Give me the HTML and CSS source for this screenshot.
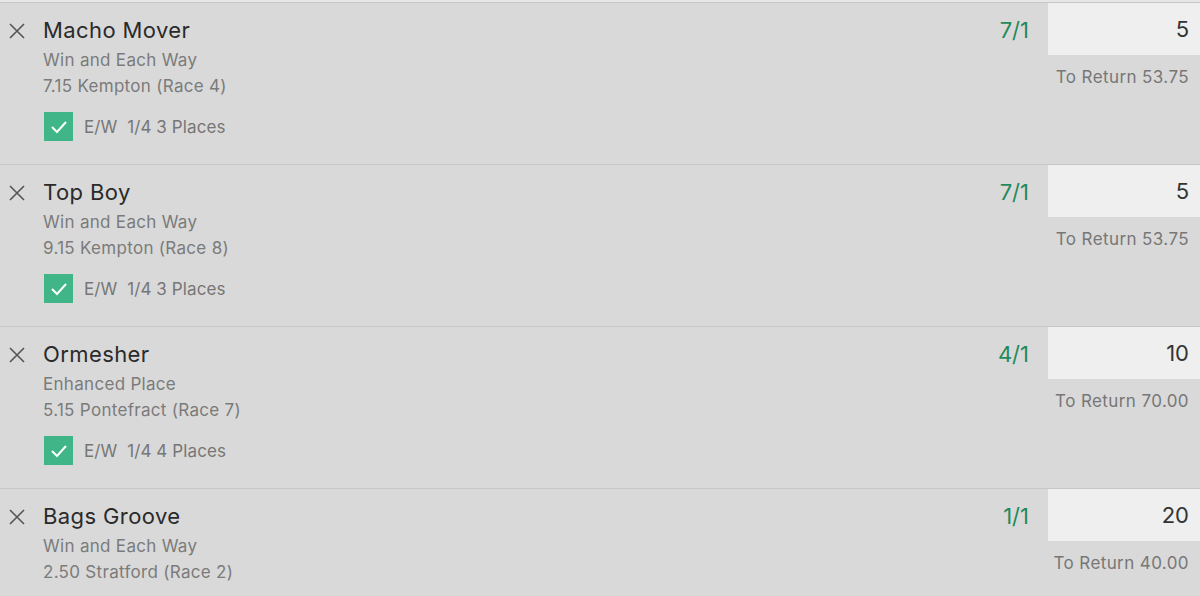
FILE: index.html
```html
<!DOCTYPE html>
<html lang="en">
<head>
    <meta charset="UTF-8">
    <title>Bet Slip</title>
    <link rel="stylesheet" href="styles.css">
</head>
<body>

    <div class="slip">

        <!-- Selection 1 -->
        <div class="bet">
            <div class="remove"><svg viewBox="0 0 16 16" width="16" height="16"><path d="M1 1L15 15M15 1L1 15" /></svg></div>
            <div class="info">
                <div class="name">Macho Mover</div>
                <div class="sub">Win and Each Way</div>
                <div class="sub">7.15 Kempton (Race 4)</div>
                <label class="ew"><span class="box"><svg viewBox="0 0 29 29" width="29" height="29"><path d="M8 15l5 5 9-10" /></svg></span>E/W &nbsp;1/4 3 Places</label>
            </div>
            <div class="odds">7/1</div>
            <div class="stake">
                <div class="stake-input">5</div>
                <div class="returns">To Return 53.75</div>
            </div>
        </div>

        <!-- Selection 2 -->
        <div class="bet">
            <div class="remove"><svg viewBox="0 0 16 16" width="16" height="16"><path d="M1 1L15 15M15 1L1 15" /></svg></div>
            <div class="info">
                <div class="name">Top Boy</div>
                <div class="sub">Win and Each Way</div>
                <div class="sub">9.15 Kempton (Race 8)</div>
                <label class="ew"><span class="box"><svg viewBox="0 0 29 29" width="29" height="29"><path d="M8 15l5 5 9-10" /></svg></span>E/W &nbsp;1/4 3 Places</label>
            </div>
            <div class="odds">7/1</div>
            <div class="stake">
                <div class="stake-input">5</div>
                <div class="returns">To Return 53.75</div>
            </div>
        </div>

        <!-- Selection 3 -->
        <div class="bet">
            <div class="remove"><svg viewBox="0 0 16 16" width="16" height="16"><path d="M1 1L15 15M15 1L1 15" /></svg></div>
            <div class="info">
                <div class="name">Ormesher</div>
                <div class="sub">Enhanced Place</div>
                <div class="sub">5.15 Pontefract (Race 7)</div>
                <label class="ew"><span class="box"><svg viewBox="0 0 29 29" width="29" height="29"><path d="M8 15l5 5 9-10" /></svg></span>E/W &nbsp;1/4 4 Places</label>
            </div>
            <div class="odds">4/1</div>
            <div class="stake">
                <div class="stake-input">10</div>
                <div class="returns">To Return 70.00</div>
            </div>
        </div>

        <!-- Selection 4 -->
        <div class="bet">
            <div class="remove"><svg viewBox="0 0 16 16" width="16" height="16"><path d="M1 1L15 15M15 1L1 15" /></svg></div>
            <div class="info">
                <div class="name">Bags Groove</div>
                <div class="sub">Win and Each Way</div>
                <div class="sub">2.50 Stratford (Race 2)</div>
            </div>
            <div class="odds">1/1</div>
            <div class="stake">
                <div class="stake-input">20</div>
                <div class="returns">To Return 40.00</div>
            </div>
        </div>

    </div>

</body>
</html>
```

FILE: styles.css
```css
/* General */
body {
    margin: 0;
    padding: 0;
    font-family: Inter, "Liberation Sans", Arial, sans-serif;
    background-color: #d9d9d9;
    overflow: hidden;
}

.slip {
    border-top: 2px solid #e6e6e6;
}

/* Bet row */
.bet {
    display: flex;
    height: 161px;
    border-top: 1px solid #c6c6c6;
    border-bottom: 1px solid #c6c6c6;
    margin-bottom: -1px;
}

.remove {
    width: 43px;
    padding: 20px 0 0 9px;
    box-sizing: border-box;
}

.remove svg {
    display: block;
    stroke: #555;
    stroke-width: 1.6;
    fill: none;
}

.info {
    flex: 1;
    padding-top: 12px;
}

.name {
    font-size: 22px;
    line-height: 30px;
    padding-bottom: 2px;
    letter-spacing: 0.4px;
    color: #2a2a2a;
}

.sub {
    font-size: 17px;
    line-height: 26px;
    letter-spacing: 0.3px;
    color: #7b7b7b;
}

/* Each way checkbox */
.ew {
    display: flex;
    align-items: center;
    margin-top: 13px;
    font-size: 17px;
    letter-spacing: 0.1px;
    color: #767676;
}

.box {
    width: 29px;
    height: 29px;
    margin: 0 11px 0 1px;
    background: #3fb588;
}

.box svg {
    display: block;
    stroke: #fff;
    stroke-width: 2;
    fill: none;
}

/* Odds and stake */
.odds {
    padding: 12px 19px 0 0;
    font-size: 22px;
    line-height: 30px;
    color: #1f8a5b;
}

.stake {
    width: 152px;
    text-align: right;
}

.stake-input {
    height: 52px;
    line-height: 52px;
    padding-right: 11px;
    background: #efefef;
    font-size: 22px;
    color: #333;
}

.returns {
    padding: 12px 11px 0 0;
    font-size: 17px;
    letter-spacing: 0.4px;
    color: #777;
}
```
